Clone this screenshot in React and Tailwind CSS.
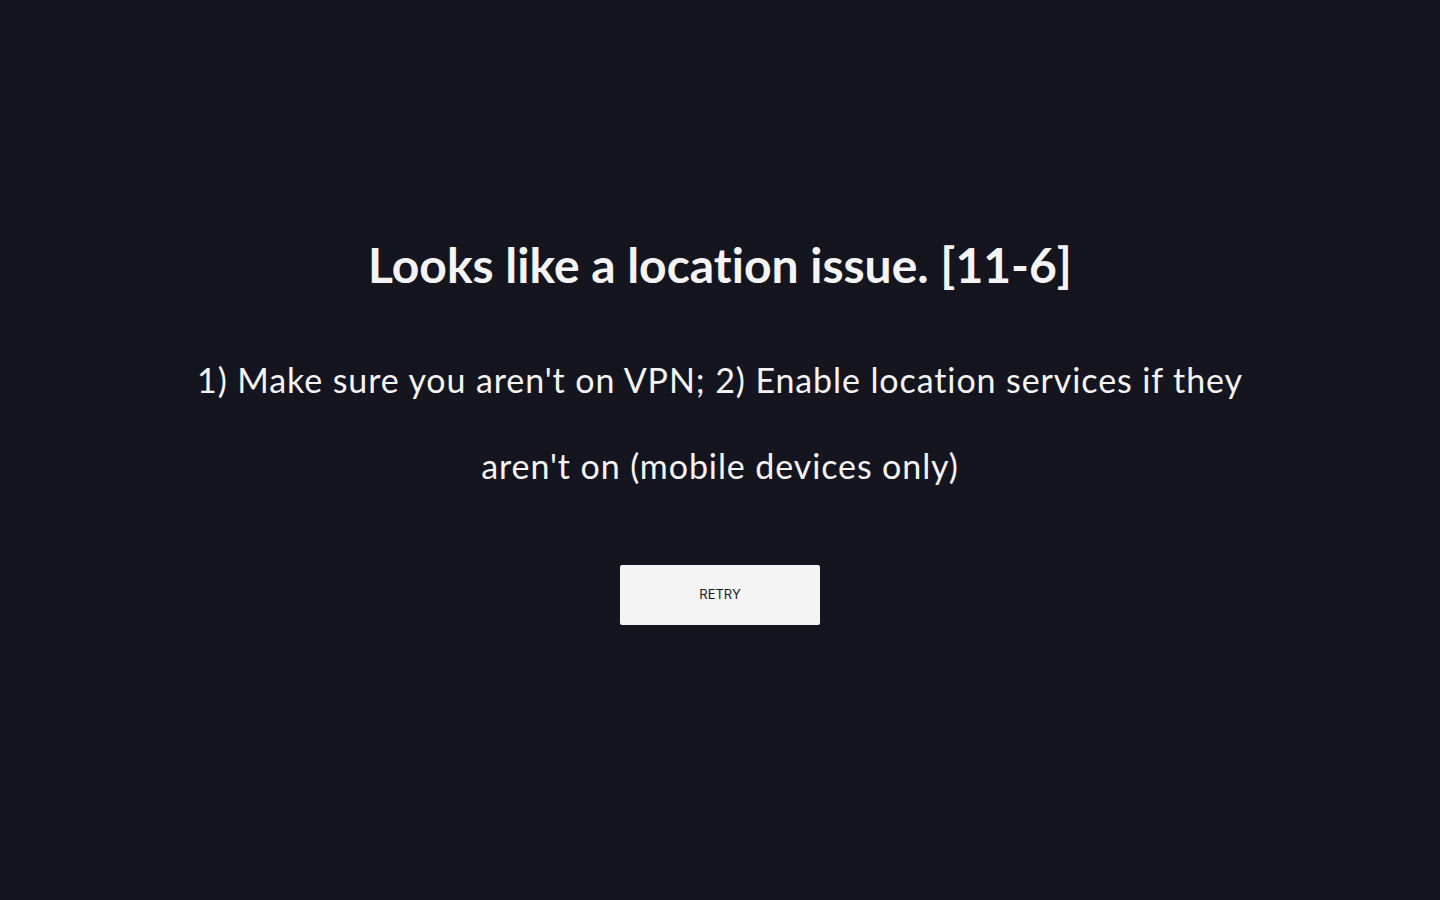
import React from 'react';

export default function App() {
  return (
    <div
      className="min-h-screen w-full bg-[#151520] flex flex-col items-center pt-[235px] text-center [font-variant-ligatures:none]"
      style={{ fontFamily: 'Lato, "Noto Sans", sans-serif' }}
    >
      <h1 className="text-[48px] leading-[60px] font-bold text-[#f4f4f4]">Looks like a location issue. [11-6]</h1>
      <p className="mt-[42px] max-w-[1100px] text-[34px] leading-[86px] tracking-[0.9px] text-[#f4f4f4]">
        1) Make sure you aren't on VPN; 2) Enable location services if they aren't on (mobile devices only)
      </p>
      <button
        className="mt-[56px] w-[200px] h-[60px] rounded-[2px] bg-[#f4f4f4] text-[13px] text-[#1b1b26] uppercase"
        style={{ fontFamily: 'Inter, sans-serif' }}
      >
        Retry
      </button>
    </div>
  );
}
